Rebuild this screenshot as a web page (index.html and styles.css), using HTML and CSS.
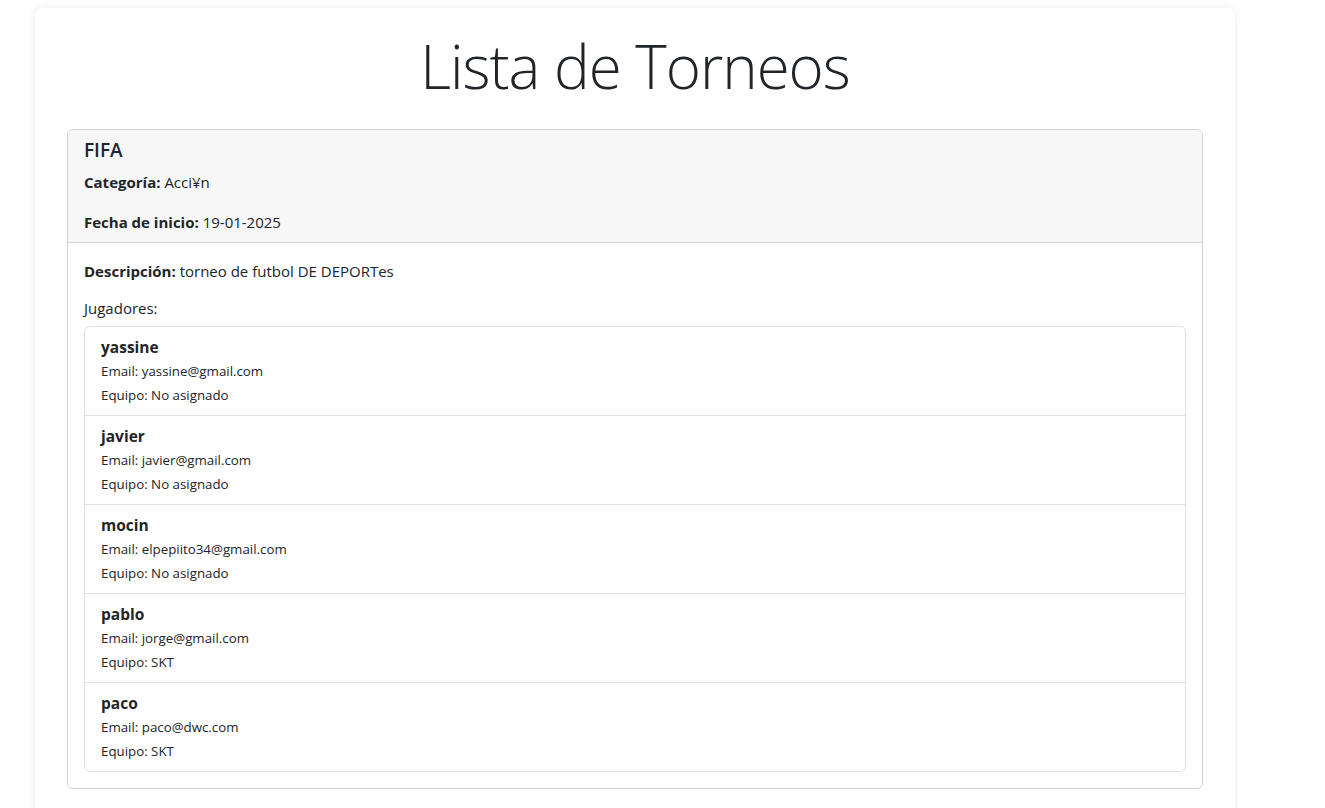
FILE: index.html
```html
<!DOCTYPE html>
<html lang="es">
<head>
<meta charset="utf-8">
<title>Lista de Torneos</title>
<link rel="stylesheet" href="styles.css">
</head>
<body>
<div class="container">
  <h1 class="title">Lista de Torneos</h1>
  <div class="card">
    <div class="card-header">
      <h5 class="card-title">FIFA</h5>
      <p><strong>Categoría:</strong> Acci¥n</p>
      <p class="last"><strong>Fecha de inicio:</strong> 19-01-2025</p>
    </div>
    <div class="card-body">
      <p><strong>Descripción:</strong> torneo de futbol DE DEPORTes</p>
      <h6 class="players-label">Jugadores:</h6>
      <ul class="list-group">
        <li class="list-item"><strong>yassine</strong><small>Email: yassine@gmail.com</small><small>Equipo: No asignado</small></li>
        <li class="list-item"><strong>javier</strong><small>Email: javier@gmail.com</small><small>Equipo: No asignado</small></li>
        <li class="list-item"><strong>mocin</strong><small>Email: elpepiito34@gmail.com</small><small>Equipo: No asignado</small></li>
        <li class="list-item"><strong>pablo</strong><small>Email: jorge@gmail.com</small><small>Equipo: SKT</small></li>
        <li class="list-item"><strong>paco</strong><small>Email: paco@dwc.com</small><small>Equipo: SKT</small></li>
      </ul>
    </div>
  </div>
</div>
</body>
</html>
```

FILE: styles.css
```css
* { box-sizing: border-box; }
html, body { margin: 0; padding: 0; background: #fff; }
body {
  font-family: "Open Sans", "Noto Sans", sans-serif;
  font-size: 15px;
  line-height: 24px;
  color: #212529;
}
.container {
  width: 1200px;
  margin: 8px 0 0 35px;
  padding: 20px 32px 40px;
  background: #fff;
  border-radius: 8px;
  box-shadow: 0 0 10px rgba(0, 0, 0, 0.08);
}
.title {
  margin: 0 0 24px;
  text-align: center;
  font-size: 60px;
  font-weight: 300;
  letter-spacing: -1px;
  line-height: 77px;
}
.card {
  border: 1px solid #d2d2d2;
  border-radius: 6px;
  overflow: hidden;
}
.card-header {
  background: #f7f7f7;
  padding: 8px 16px;
  border-bottom: 1px solid #d2d2d2;
}
.card-title {
  margin: 0 0 8px;
  font-size: 19px;
  font-weight: 600;
  line-height: 24px;
}
p { margin: 0 0 16px; }
p.last { margin: 0; }
strong { font-weight: 700; }
.card-body { padding: 16px; }
.players-label {
  margin: 0 0 8px;
  font-size: 15px;
  font-weight: 500;
  line-height: 19px;
}
.list-group {
  list-style: none;
  margin: 0;
  padding: 0;
  border: 1px solid #dee2e6;
  border-radius: 6px;
}
.list-item {
  display: flex;
  flex-direction: column;
  padding: 8px 16px;
  border-top: 1px solid #dee2e6;
}
.list-item:first-child { border-top: none; }
.list-item strong { font-size: 15.5px; }
.list-item small { font-size: 13.3px; line-height: 24px; }
```
